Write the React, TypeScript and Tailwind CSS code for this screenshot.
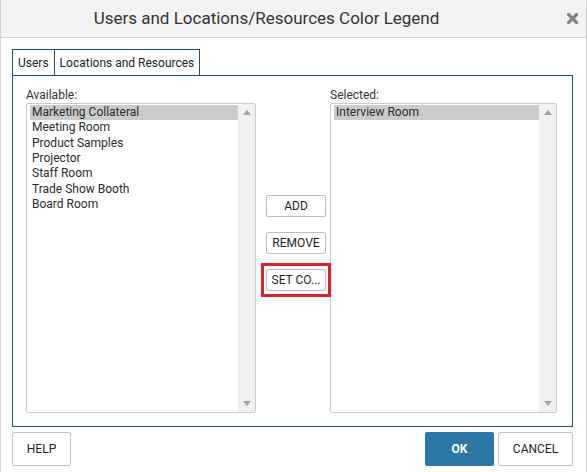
import type { ReactNode } from 'react';

const available = [
  'Marketing Collateral',
  'Meeting Room',
  'Product Samples',
  'Projector',
  'Staff Room',
  'Trade Show Booth',
  'Board Room',
];

const selected = ['Interview Room'];

function ListBox({ items, width }: { items: string[]; width: string }) {
  return (
    <div
      className={`${width} h-[310px] flex border border-[#cacaca] rounded-[2px] bg-white overflow-hidden`}
    >
      <ul className="flex-1 min-w-0 pl-[3px] pt-[1px]">
        {items.map((item, i) => (
          <li
            key={item}
            className={`h-[15.33px] leading-[15.33px] pl-[2px] text-[12px] text-[#2b2b2b] whitespace-nowrap ${
              i === 0 ? 'bg-[#cbcbcb]' : ''
            }`}
          >
            {item}
          </li>
        ))}
      </ul>
      <div className="w-[17px] bg-[#f1f1f1] flex flex-col items-center justify-between py-[6px]">
        <svg width="8" height="5" viewBox="0 0 8 5">
          <polygon points="4,0 8,5 0,5" fill="#a3a3a3" />
        </svg>
        <svg width="8" height="5" viewBox="0 0 8 5">
          <polygon points="0,0 8,0 4,5" fill="#a3a3a3" />
        </svg>
      </div>
    </div>
  );
}

function SmallButton({ children }: { children: ReactNode }) {
  return (
    <button
      type="button"
      className="w-[60px] h-[22px] bg-white border border-[#bdbdbd] rounded-[2px] text-[12px] text-[#1f1f1f] flex items-center justify-center"
    >
      {children}
    </button>
  );
}

function FooterButton({ children, className }: { children: ReactNode; className: string }) {
  return (
    <button
      type="button"
      className={`h-[34px] rounded-[2px] text-[12px] flex items-center justify-center ${className}`}
    >
      {children}
    </button>
  );
}

export default function App() {
  return (
    <div
      className="w-[588px] h-[472px] bg-white overflow-hidden"
      style={{ fontFamily: 'Roboto, "Noto Sans", Arial, sans-serif' }}
    >
      <div className="w-[587px] h-[472px] flex flex-col border-l border-r border-[#d3d3d3] rounded-tr-[3px] bg-white">
        <header className="h-[38px] shrink-0 flex items-center bg-[#f3f3f3] border-b border-[#d2d2d2] rounded-tr-[3px]">
          <h1 className="flex-1 text-center text-[17px] text-[#333] font-normal">
            Users and Locations/Resources Color Legend
          </h1>
          <div className="w-[54px] flex justify-end pr-[8px]">
            <svg width="11" height="11" viewBox="0 0 11 11">
              <path
                d="M1.5 1.5 L9.5 9.5 M9.5 1.5 L1.5 9.5"
                stroke="#858585"
                strokeWidth="3.2"
                strokeLinecap="square"
              />
            </svg>
          </div>
        </header>

        <div className="pl-[11px] pt-[11px]">
          <div className="flex h-[26px] text-[12px] text-[#222]">
            <div className="px-[5px] flex items-center border-l border-t border-r border-[#234b8a]">
              Users
            </div>
            <div className="px-[5px] flex items-center border-t border-r border-[#234b8a]">
              Locations and Resources
            </div>
          </div>

          <div className="w-[561px] h-[352px] border border-[#234b8a] pl-[13px] pr-[14px] pt-[12px] flex">
            <div className="flex flex-col">
              <span className="text-[12px] leading-[15px] text-[#333]">Available:</span>
              <ListBox items={available} width="w-[230px]" />
            </div>

            <div className="ml-[10px] mr-[4px] pt-[107px] flex flex-col gap-[15px]">
              <SmallButton>ADD</SmallButton>
              <SmallButton>REMOVE</SmallButton>
              <div className="relative">
                <SmallButton>SET CO...</SmallButton>
                <div className="absolute -left-[5px] -right-[5px] -top-[6px] -bottom-[6px] border-[3px] border-[#e0202a] pointer-events-none" />
              </div>
            </div>

            <div className="flex flex-col">
              <span className="text-[12px] leading-[15px] text-[#333]">Selected:</span>
              <ListBox items={selected} width="w-[227px]" />
            </div>
          </div>

          <div className="mt-[5px] w-[561px] flex">
            <FooterButton className="w-[59px] bg-white border border-[#c4c4c4] text-[#1f1f1f]">
              HELP
            </FooterButton>
            <div className="flex-1" />
            <FooterButton className="w-[69px] bg-[#2d77a7] text-white font-bold">OK</FooterButton>
            <FooterButton className="ml-[4px] w-[75px] bg-white border border-[#c4c4c4] text-[#1f1f1f]">
              CANCEL
            </FooterButton>
          </div>
        </div>
      </div>
    </div>
  );
}
